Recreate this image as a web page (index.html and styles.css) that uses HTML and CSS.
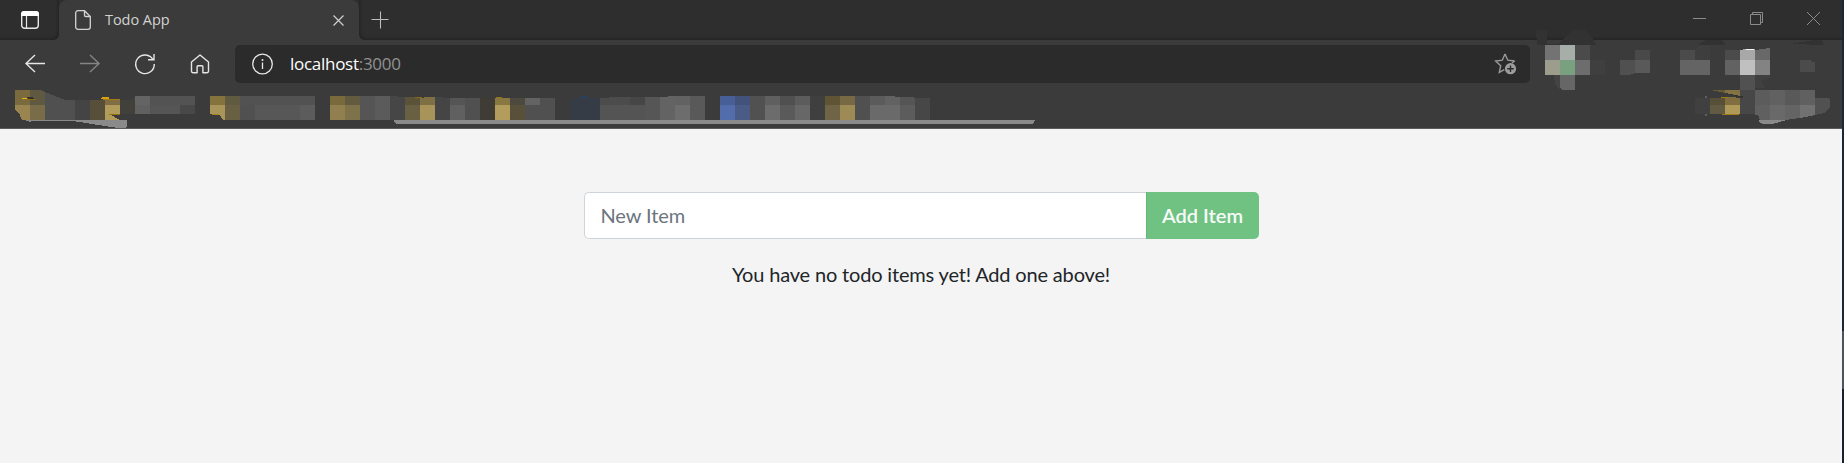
FILE: index.html
```html
<!DOCTYPE html>
<html lang="en">
<head>
<meta charset="utf-8">
<title>Todo App</title>
<link rel="stylesheet" href="styles.css">
</head>
<body>
<div class="window">
  <header class="chrome">
    <div class="titlebar">
      <div class="tab-actions">
        <svg width="18" height="18" viewBox="0 0 18 18"><rect x=".7" y=".7" width="16.6" height="16.6" rx="3" fill="none" stroke="#e8e8e8" stroke-width="1.4"/><path d="M0 5V3a3 3 0 0 1 3-3h12a3 3 0 0 1 3 3v2z" fill="#fff"/><path d="M5.5 5v12" stroke="#e8e8e8" stroke-width="1.2"/></svg>
      </div>
      <div class="tab">
        <svg width="16" height="20" viewBox="0 0 16 20" fill="none" stroke="#d4d4d4" stroke-width="1.3"><path d="M3 .7h6.5l5.8 5.8V17a2.3 2.3 0 0 1-2.3 2.3H3A2.3 2.3 0 0 1 .7 17V3A2.3 2.3 0 0 1 3 .7z"/><path d="M9.5 1v4.2a1.3 1.3 0 0 0 1.3 1.3H15"/></svg>
        <span class="tab-title">Todo App</span>
        <svg class="tab-close" width="11" height="11" viewBox="0 0 11 11" stroke="#d0d0d0" stroke-width="1.2"><path d="M.5.5l10 10M10.5.5l-10 10"/></svg>
      </div>
      <div class="strip">
        <svg class="new-tab" width="18" height="18" viewBox="0 0 18 18" stroke="#bdbdbd" stroke-width="1.1"><path d="M9.500 .5v17M.5 8.500h17"/></svg>
        <div class="controls">
          <svg width="13" height="13" viewBox="0 0 13 13"><path d="M0 6.500h13" stroke="#8b8b8b"/></svg>
          <svg width="13" height="13" viewBox="0 0 13 13" fill="none" stroke="#8b8b8b"><path d="M.5 2.500h10v10H.5zM2.500 2.500v-2h10v10h-2"/></svg>
          <svg width="13" height="13" viewBox="0 0 13 13" stroke="#8b8b8b"><path d="M0 0l13 13M13 0L0 13"/></svg>
        </div>
      </div>
    </div>
    <div class="toolbar">
      <nav class="nav">
        <svg width="20" height="20" viewBox="0 0 20 20" fill="none" stroke="#e6e6e6" stroke-width="1.4"><path d="M10 1L1 9.500 10 18M1 9.500h19"/></svg>
        <svg width="20" height="20" viewBox="0 0 20 20" fill="none" stroke="#858585" stroke-width="1.4"><path d="M10 1l9 8.500L10 18M19 9.500H0"/></svg>
        <svg width="20" height="22" viewBox="0 0 20 22" fill="none" stroke="#e6e6e6" stroke-width="1.4"><path d="M18 6.500A9.300 9.300 0 1 0 19.300 11M19 1v5.800h-6"/></svg>
        <svg width="20" height="20" viewBox="0 0 20 20" fill="none" stroke="#e6e6e6" stroke-width="1.4" stroke-linejoin="round"><path d="M1.500 8L10 1l8.500 7v9.300a1.400 1.400 0 0 1-1.400 1.400h-4.200v-6a1 1 0 0 0-1-1H8.100a1 1 0 0 0-1 1v6H2.900a1.400 1.400 0 0 1-1.400-1.400z"/></svg>
      </nav>
      <div class="address">
        <svg width="22" height="22" viewBox="0 0 22 22"><circle cx="11.500" cy="11" r="9.800" fill="none" stroke="#e8e8e8" stroke-width="1.300"/><path d="M11.500 9.500v6.500" stroke="#e8e8e8" stroke-width="1.300"/><circle cx="11.500" cy="6.900" r="1" fill="#e8e8e8"/></svg>
        <span class="url">localhost<span class="port">:3000</span></span>
        <svg class="favorite" width="22" height="22" viewBox="0 0 22 22"><path d="M10 1l2.800 6.200 6.800.8M10 1L7.300 7.200.7 8l5 4.700-1.400 6.600 5-2.700" fill="none" stroke="#9a9a9a" stroke-width="1.400"/><path d="M19.600 8L17 10" stroke="#9a9a9a" stroke-width="1.400"/><circle cx="15.500" cy="15.700" r="5.600" fill="#9c9c9c"/><path d="M15.500 12.400v6.600M12.200 15.700h6.600" stroke="#2b2b2b" stroke-width="1.400"/></svg>
      </div>
      <svg class="extensions" width="306" height="48" viewBox="1536 40 306 48" shape-rendering="crispEdges">
        <path d="M1536 30h11v14h11q8-8 14-14h12q8 5 12 15h-59zM1699 45q3-5 10-5h12q4 2 4 5zM1790 44l24-4h8l2 5z" fill="#323232"/>
        <path d="M1545 45h15v15h-15z" fill="#737373"/><path d="M1560 45h15v15h-15z" fill="#a7aeaa"/><path d="M1575 45h15v15h-15z" fill="#4b4b4b"/>
        <path d="M1545 60h15v15h-15z" fill="#9c9d8c"/><path d="M1560 60h15v15h-15z" fill="#7aa17f"/><path d="M1575 60h15v15h-15z" fill="#6d6d6d"/>
        <path d="M1590 60h15v15h-15z" fill="#3f3f3f"/><path d="M1554 75h6v15q-6-5-6-15z" fill="#444"/><path d="M1560 75h15v15h-13l-2-2z" fill="#666"/>
        <path d="M1635 50h15v10h-15z" fill="#494949"/><path d="M1620 60h15v13l-5 2h-10z" fill="#505050"/><path d="M1635 60h15v13h-15z" fill="#595959"/>
        <path d="M1680 50h15v10h-15z" fill="#4b4b4b"/><path d="M1695 50l5-5h10v15h-15z" fill="#3e3e3e"/><path d="M1680 60h30v15h-30z" fill="#646464"/>
        <path d="M1725 50h15v10h-15z" fill="#4b4b4b"/><path d="M1740 50l5-1h9l1 1v10h-15z" fill="#a8a8a8"/><path d="M1746 49h8v1h-8z" fill="#f4f4f4"/><path d="M1755 50l15-2v12h-15z" fill="#686868"/>
        <path d="M1725 60h15v15h-15z" fill="#626262"/><path d="M1740 60h15v15h-15z" fill="#c0c0c0"/><path d="M1755 60h15v15h-15z" fill="#838383"/>
        <path d="M1740 75h15v15h-15z" fill="#515151"/><path d="M1755 75h15v3l-9 3 4 7h-10z" fill="#404040"/><path d="M1800 60h10l2 2h3v10h-15z" fill="#4b4b4b"/>
      </svg>
    </div>
    <svg class="bookmarks" width="1842" height="40" viewBox="0 88 1842 40" shape-rendering="crispEdges">
      <path d="M15 90h15v15H15z" fill="#7a6a3d"/><path d="M30 90h11l4 2v13H30z" fill="#605941"/><path d="M45 92l20 8h10v20H45z" fill="#505050"/>
      <path d="M15 105h15v15h-8l-3-7-4-3z" fill="#9a8551"/><path d="M30 105h15v15H30z" fill="#796c48"/><path d="M75 100h15v20H75z" fill="#444"/><path d="M90 100h15v20H90z" fill="#584f3b"/>
      <path d="M105 100h15v5h-15z" fill="#7f6e41"/><path d="M105 105h15v10h-9l9 5h-15z" fill="#b29c5b"/><path d="M120 100h11l4-4v18h-15z" fill="#41403b"/>
      <path d="M21 98h5l1 1h-5z" fill="#e7b516"/><path d="M26 97h6l2 2h-5z" fill="#30302c"/><path d="M25 99h11v1H25z" fill="#8f6b10"/><path d="M102 97h7v2h-8z" fill="#d8a310"/><path d="M103 99h17v1h-17z" fill="#a87c10"/><path d="M109 114h11v1h-11z" fill="#98700a"/>
      <path d="M25 120h50l45 0h7v6l-2 2h-7L73 121H32l-2 1z" fill="#8a8a8a"/>
      <path d="M135 96h15v9h-15z" fill="#646464"/><path d="M150 96h45v9h-45z" fill="#535353"/><path d="M135 105h15v9h-15z" fill="#606060"/><path d="M150 105h30v9h-30z" fill="#555"/><path d="M180 105h15v9h-15z" fill="#484848"/>
      <path d="M210 96h15v9h-15z" fill="#84733d"/><path d="M225 96h15v9h-15z" fill="#605b40"/><path d="M240 96h75v9h-75z" fill="#525252"/><path d="M210 105h15v15h-2l-4-6h-9z" fill="#a99459"/><path d="M225 105h15v15h-15z" fill="#695f43"/><path d="M240 105h15v15h-15z" fill="#505050"/><path d="M255 105h45v15h-45z" fill="#575757"/><path d="M300 105h15v15h-15z" fill="#5c5c5c"/><path d="M212 114h7v1h-7z" fill="#ae8218"/>
      <path d="M330 96h15v9h-15z" fill="#786a3b"/><path d="M345 96h15v9h-15z" fill="#625b3f"/><path d="M360 96h15v24h-15z" fill="#555"/><path d="M375 96h15v24h-15z" fill="#5b5b5b"/><path d="M330 105h15v15h-15z" fill="#927f50"/><path d="M345 105h15v15h-15z" fill="#7e724a"/>
      <path d="M390 96l15 1v23h-15z" fill="#464646"/><path d="M405 97h15v8h-15z" fill="#5b523a"/><path d="M405 105h15v15h-15z" fill="#695f43"/><path d="M420 98l8-1h7v8h-15z" fill="#7e6f45"/><path d="M420 105h15v15h-15z" fill="#a89358"/><path d="M415 97h7v1h-7z" fill="#8c6a13"/><path d="M435 97l15 1v22h-15z" fill="#454545"/>
      <path d="M450 98h15v7h-15z" fill="#555"/><path d="M450 105h15v15h-15z" fill="#606060"/><path d="M465 98h15v22h-15z" fill="#505050"/><path d="M480 98h15v22h-15z" fill="#3e3c35"/><path d="M495 98h15v7h-15z" fill="#897742"/><path d="M496 97h6v1h-6z" fill="#94711b"/><path d="M495 105h15v15h-15z" fill="#b39d5c"/><path d="M510 98h15v7h-15z" fill="#4d493e"/><path d="M510 105h15v15h-15z" fill="#585039"/><path d="M525 98h15v7h-15z" fill="#636363"/><path d="M525 105h15v15h-15z" fill="#505050"/><path d="M540 98h15v22h-15z" fill="#505050"/>
      <path d="M570 99l8-1 4-2h4l3 2h11v22h-30z" fill="#353c46"/><path d="M580 97l2-1h4l3 2h-9z" fill="#2b405b"/>
      <path d="M600 98h8l1-1h21v8h-30z" fill="#4c4c4c"/><path d="M630 97h15v8h-15z" fill="#464646"/><path d="M600 105h45v15h-45z" fill="#545454"/><path d="M645 97h15v23h-15z" fill="#565656"/><path d="M660 97l15-1v24h-15z" fill="#636363"/><path d="M675 96h15v9h-15z" fill="#626262"/><path d="M675 105h15v15h-15z" fill="#6d6d6d"/><path d="M690 96h15v24h-15z" fill="#595959"/>
      <path d="M720 96h15v9h-15z" fill="#475e97"/><path d="M735 96h15v9h-15z" fill="#42527a"/><path d="M720 105h15v15h-15z" fill="#536cab"/><path d="M735 105h15v15h-15z" fill="#4a5b86"/><path d="M750 96h15v24h-15z" fill="#515151"/><path d="M765 96h15v9h-15z" fill="#5f5f5f"/><path d="M765 105h15v15h-15z" fill="#6c6c6c"/><path d="M780 96h15v9h-15z" fill="#505050"/><path d="M780 105h15v15h-15z" fill="#5a5a5a"/><path d="M795 96h15v9h-15z" fill="#5c5c5c"/><path d="M795 105h15v15h-15z" fill="#676767"/><path d="M810 96h15v24h-15z" fill="#3f3f3f"/>
      <path d="M825 96h15v9h-15z" fill="#5f5535"/><path d="M840 96h15v9h-15z" fill="#776943"/><path d="M825 105h15v15h-15z" fill="#6f6446"/><path d="M840 105h15v15h-15z" fill="#9d8a54"/><path d="M855 96h15v24h-15z" fill="#505050"/><path d="M870 96h15v9h-15z" fill="#5b5b5b"/><path d="M885 96h4l11 1v8h-15z" fill="#626262"/><path d="M870 105h30v15h-30z" fill="#6a6a6a"/><path d="M900 97h13l2 1v7h-15z" fill="#555"/><path d="M900 105h15v15h-15z" fill="#5c5c5c"/><path d="M915 98h15v22h-15z" fill="#474747"/>
      <path d="M393 120h642l-1 2-2 2H396l-2-3z" fill="#8a8a8a"/>
      <path d="M1695 98h15v16h-15z" fill="#404040"/><path d="M1705 96h2v2h-2zM1705 114h2v2h-2z" fill="#606060"/><path d="M1710 98h15v7h-15z" fill="#584f39"/><path d="M1710 105h15v9h-15z" fill="#625a43"/><path d="M1711 90h14v3z" fill="#665b38"/><path d="M1725 90h15v6l-15-3z" fill="#837243"/><path d="M1725 97h7l8 1v7h-15z" fill="#806e40"/><path d="M1725 105h15v9h-15z" fill="#b09a59"/><path d="M1721 97h7v1h-7zM1721 114h18v1h-17z" fill="#a27a12"/><path d="M1740 90h15v24h-15z" fill="#474747"/><path d="M1725 93l20 4-5 1z" fill="#343330"/>
      <path d="M1755 90h15v24h-15z" fill="#5c5c5c"/><path d="M1770 90h15v15h-15z" fill="#616161"/><path d="M1785 90h15v15h-15z" fill="#595959"/><path d="M1800 90h15v15h-15z" fill="#606060"/><path d="M1755 105h15v15h-10l-2-5h-3z" fill="#606060"/><path d="M1770 105h15v15h-15z" fill="#696969"/><path d="M1785 105h15v13l-15 2z" fill="#646464"/><path d="M1800 105h15v10l-15 3z" fill="#717171"/><path d="M1815 98h13l2 2v8l-6 5-9 2z" fill="#515151"/><path d="M1759 120h28l-15 4h-9l-3-1z" fill="#8a8a8a"/>
    </svg>
  </header>
  <main class="page">
    <form class="input-group">
      <input class="new-item" type="text" placeholder="New Item" aria-label="New item">
      <button class="add" type="button">Add Item</button>
    </form>
    <p class="empty">You have no todo items yet! Add one above!</p>
  </main>
</div>
<div class="desktop"></div>
</body>
</html>
```
FILE: styles.css
```css
* { box-sizing: border-box; }
body {
  margin: 0;
  height: 463px;
  display: flex;
  overflow: hidden;
  font-family: Lato, sans-serif;
  background: #f4f4f4;
}
svg { display: block; flex: none; overflow: visible; }
.window { width: 1842px; flex: none; display: flex; flex-direction: column; }
.desktop {
  flex: 1;
  background: linear-gradient(#1a2737 331px, #4b545e 331px 389px, #162231 389px);
}
.chrome {
  height: 129px;
  background: #3b3b3b;
  border-bottom: 1px solid #5c5c5c;
  font-family: "Open Sans", sans-serif;
}
.titlebar { height: 40px; display: flex; background: linear-gradient(#2e2e2e 20px, #3b3b3b 20px); }
.tab-actions {
  width: 59px;
  padding: 11px 0 0 21px;
  background: #2e2e2e;
  border-radius: 0 0 6px 0;
  box-shadow: inset -2px -2px 3px -1px #222;
}
.tab {
  width: 300px;
  height: 40px;
  padding: 0 15px 0 16px;
  display: flex;
  align-items: center;
  background: #3b3b3b;
  border-radius: 8px 8px 0 0;
}
.tab-title { margin-left: 14px; font-size: 14.5px; line-height: 20px; color: #d2d2d2; letter-spacing: -.05px; }
.tab-close { margin-left: auto; }
.strip {
  flex: 1;
  display: flex;
  background: #2e2e2e;
  border-radius: 0 0 0 6px;
  box-shadow: inset 2px -2px 3px -1px #222;
}
.new-tab { margin: 11px 0 0 12px; }
.controls { margin: 12px 22px 0 auto; display: flex; gap: 44px; }
.toolbar { height: 48px; display: flex; }
.nav { width: 235px; padding: 0 0 1px 25px; display: flex; align-items: center; gap: 35px; }
.address {
  width: 1295px;
  height: 38px;
  margin: 5px 6px 0 0;
  padding: 0 13px 0 16px;
  display: flex;
  align-items: center;
  background: #2b2b2b;
  border-radius: 5px;
}
.url { margin-left: 17px; font-size: 17px; line-height: 24px; color: #fff; letter-spacing: -.28px; }
.port { color: #929292; }
.favorite { margin-left: auto; }
.page { flex: 1; display: flex; flex-direction: column; align-items: center; padding-top: 63px; background: #f4f4f4; }
.input-group { width: 675px; height: 47px; display: flex; }
.new-item {
  flex: 1;
  min-width: 0;
  padding: 0 16px 2px;
  border: 1px solid #ced4da;
  border-right: 0;
  border-radius: 5px 0 0 5px;
  background: #fff;
  font: 20px/30px Lato, sans-serif;
  letter-spacing: -.1px;
  color: #212529;
}
.new-item::placeholder { color: #6c757d; opacity: 1; }
.add {
  width: 113px;
  padding: 0 0 2px;
  border: 0;
  border-left: 1px solid #63b977;
  border-radius: 0 5px 5px 0;
  background: #70c283;
  color: #f7fbf8;
  font: 600 20px/30px Lato, sans-serif;
}
.empty { margin: 20px 0 0; font-size: 20px; line-height: 30px; letter-spacing: -.17px; color: #212529; }
```
